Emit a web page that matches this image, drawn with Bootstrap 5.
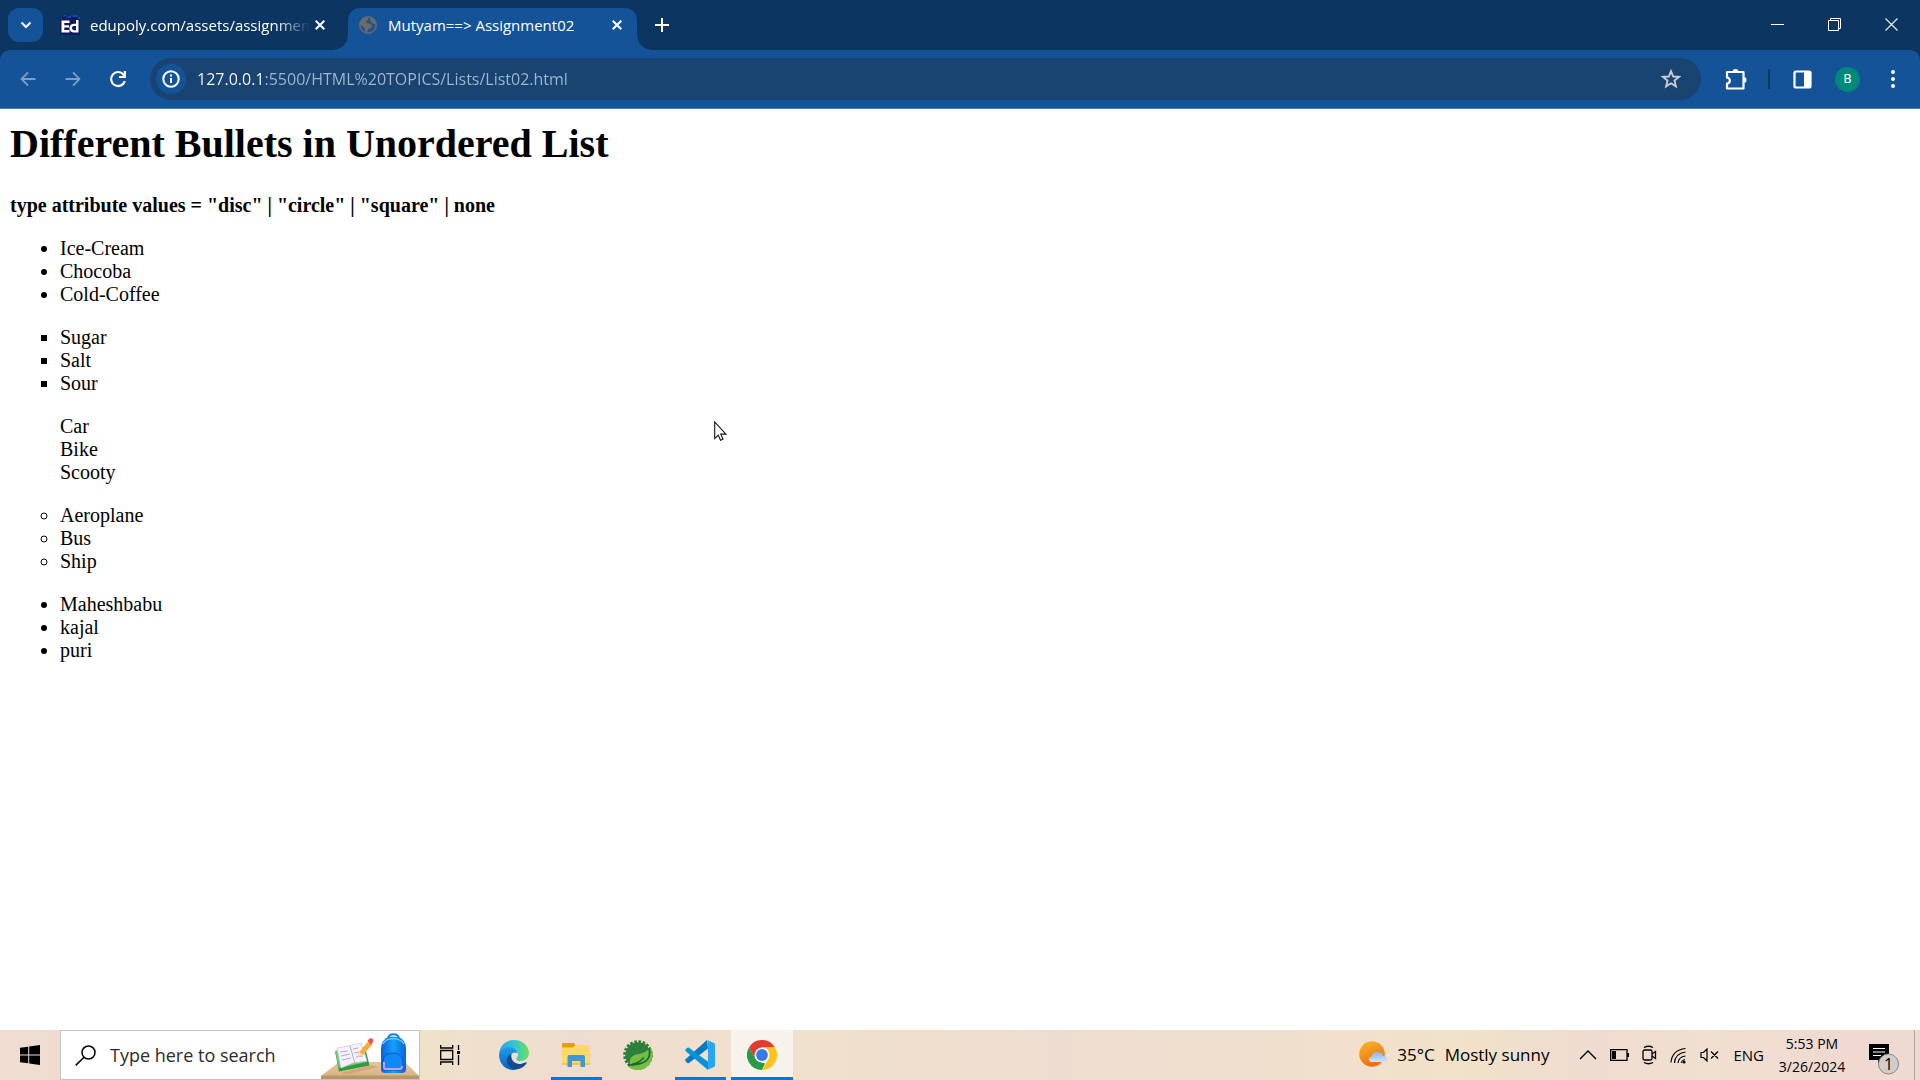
<!DOCTYPE html>
<html lang="en">
<head>
<meta charset="utf-8">
<meta name="viewport" content="width=device-width, initial-scale=1">
<title>Mutyam==&gt; Assignment02</title>
<link href="https://cdn.jsdelivr.net/npm/bootstrap@5.3.0/dist/css/bootstrap.min.css" rel="stylesheet">
<style>
  :root { --frame: #0c3561; --bar: #155399; --pill: #194472; }
  body { font-family: "Open Sans", "Noto Sans", sans-serif; color: #000; background: #fff; }
  button, input { font-family: inherit; }
  svg { display: block; flex: none; }
  .plain { border: 0; background: none; padding: 0; color: inherit; display: flex; align-items: center; justify-content: center; flex: none; }

  /* tab strip */
  .strip { background: var(--frame); height: 50px; color: #fff; padding-left: 8px; }
  .tab-search { width: 35px; height: 34px; border-radius: 11px; background: var(--bar); }
  .tab-item { height: 42px; font-size: 15px; padding: 0 8px 8px 10px; }
  .tab-item a { color: #fff; text-decoration: none; white-space: nowrap; line-height: 34px; padding-left: 10px; }
  .tab-back { width: 288px; margin-left: 7px; }
  .tab-back a { -webkit-mask-image: linear-gradient(90deg, #000 85%, transparent); mask-image: linear-gradient(90deg, #000 85%, transparent); }
  .tab-front { width: 289px; margin-left: 10px; background: var(--bar); border-radius: 12px 12px 0 0; position: relative; padding-right: 10px; }
  .tab-front::before, .tab-front::after { content: ""; position: absolute; bottom: 0; width: 14px; height: 14px; }
  .tab-front::before { left: -14px; background: radial-gradient(circle at 0 0, transparent 13px, var(--bar) 14px); }
  .tab-front::after { right: -14px; background: radial-gradient(circle at 100% 0, transparent 13px, var(--bar) 14px); }
  .tab-close { width: 20px; height: 20px; }
  .tab-new { width: 34px; height: 34px; }
  .win-btn { width: 57px; height: 40px; }

  /* toolbar */
  .tools-wrap { background: var(--frame); }
  .tools { background: var(--bar); border-radius: 10px 10px 0 0; height: 59px; color: #fff; border-bottom: 1px solid #4f7fb3; padding-left: 5px; padding-right: 5px; }
  .nav-btn { width: 45px; height: 42px; }
  .dim { color: #7d9fc7; }
  .pill { background: var(--pill); height: 42px; border-radius: 21px; margin: 0 12px 0 10px; padding: 0 20px 0 6px; }
  .site-info { width: 30px; height: 30px; border-radius: 50%; background: var(--bar); }
  .url-box { border: 0; outline: 0; padding: 0 0 0 11px; font-size: 16px; height: 36px; min-width: 0; color: transparent; caret-color: #fff;
    background: linear-gradient(90deg, #fff 75px, #a3b8cf 75px); -webkit-background-clip: text; background-clip: text; }
  .tool-btn { width: 45px; height: 42px; }
  .split { width: 2px; height: 20px; background: #0c3561; margin: 0 10px; }
  .avatar { width: 25px; height: 25px; border-radius: 50%; background: #00897b; font-family: Roboto, sans-serif; font-size: 13px; }

  /* page */
  .doc { font-family: "Liberation Serif", serif; font-size: 20px; line-height: 23px; padding: 12px 10px; }
  .doc h1 { font-size: 40px; line-height: 46px; font-weight: bold; margin: 0 0 27px; }
  .doc h4 { font-size: 20px; line-height: 23px; font-weight: bold; margin: 0 0 20px; }
  .doc ul { padding-left: 50px; margin: 0 0 20px; }
  .l-square { list-style: square; }
  .l-none { list-style: none; }
  .l-circle { list-style: circle; }
  .pointer { position: absolute; left: 714px; top: 421px; }

  /* taskbar */
  .taskbar { height: 50px; background: linear-gradient(90deg, #f0dcd2 0, #efdccf 3%, #f0e1ca 22%, #efdcd0 30%, #f0e1cb 40%, #eedcd0 55%, #f2e0cd 70%, #f1e2c8 76%, #efdbd0 83%, #f1dfcf 89%, #efd9d1 96%, #efdad2 100%); }
  .find { width: 360px; background: #fff; border: 1px solid #c4c4c4; padding-left: 14px; overflow: hidden; }
  .find input { border: 0; outline: 0; padding: 0; margin-left: 14px; font-size: 18px; min-width: 0; width: 190px; }
  .find input::placeholder { color: #2b2b2b; opacity: 1; }
  .task { width: 62px; height: 50px; position: relative; }
  .task-edge { width: 60px; }
  .task-view { width: 60px; margin-right: 3px; }
  .running::after { content: ""; position: absolute; left: 6px; right: 5px; bottom: 0; height: 3px; background: #0078d7; }
  .current { background: #f8f2ec; }
  .current::after { left: 0; right: 0; }
  .tray { font-size: 17px; }
  .tray-text { margin-left: 10px; }
  .tray-small { font-size: 15px; }
  .tray-icons { gap: 13px; margin: 0 14px 0 30px; }
  .clock { font-size: 14px; line-height: 23px; width: 84px; text-align: center; flex: none; margin-left: 6px; }
  .notes { margin: 8px 14px 0 15px; }
  .desk-edge { width: 6px; height: 50px; border-left: 1px solid #b3a5a0; }
</style>
<script src="https://cdn.jsdelivr.net/npm/bootstrap@5.3.0/dist/js/bootstrap.bundle.min.js"></script>
</head>
<body class="d-flex flex-column min-vh-100">

<header>
  <div class="strip d-flex align-items-end">
    <button class="plain tab-search mb-2" aria-label="Search tabs">
      <svg width="12" height="8" viewBox="0 0 12 8" fill="none" stroke="#fff" stroke-width="2"><path d="M1.500 1.500 6 6l4.500-4.500"/></svg>
    </button>
    <div class="tab-item tab-back d-flex align-items-center">
      <svg width="20" height="20" viewBox="0 0 20 20"><path fill="#111a5c" d="M0 2h20v18H0z"/><path fill="#1746ad" d="M1 3h1v2H1zM4 0h2v1H4zM8 1h3v2H8zM13 0h5v2h-5zM6 2h1v2H6zM18 2h2v2h-2z"/><path fill="#fff" d="M1.500 5.500h8V8H4.300v2.200h4.700v2.300H4.300V15h5.200v2.500h-8zM18.500 5v12.500h-4.700a4.400 4.400 0 0 1 0-8.800H16V5zM16 11h-2a2.100 2.100 0 0 0 0 4.200h2z"/></svg>
      <a href="#" class="flex-grow-1">edupoly.com/assets/assignmen</a>
      <button class="plain tab-close" aria-label="Close tab"><svg width="10" height="10" viewBox="0 0 10 10" stroke="#fff" stroke-width="2"><path d="m.7.7 8.600 8.600M9.300.7.7 9.300"/></svg></button>
    </div>
    <div class="tab-item tab-front d-flex align-items-center">
      <svg width="20" height="20" viewBox="0 0 20 20"><circle cx="10" cy="10" r="8.200" fill="#2c527e" stroke="#666b70" stroke-width="1.500"/><path fill="#6b6c6d" d="M2 8c1-4 4-6 7-6.300L10.500 4 8 6.500l1.500 2 3 .5 1.500 2-1 2-3 1-1 3.500C7 17 7 15 7 13.500L4.500 11 2 10zM12.500 2.500c3 1 5.500 3.500 5.500 7l-2.500-.8-2-1.700L12 5.500z"/></svg>
      <a href="#" class="flex-grow-1">Mutyam==&gt; Assignment02</a>
      <button class="plain tab-close" aria-label="Close tab"><svg width="10" height="10" viewBox="0 0 10 10" stroke="#fff" stroke-width="2"><path d="m.7.7 8.600 8.600M9.300.7.7 9.300"/></svg></button>
    </div>
    <button class="plain mb-2 ms-2 tab-new" aria-label="New tab"><svg width="14" height="14" viewBox="0 0 14 14" stroke="#fff" stroke-width="2"><path d="M7 0v14M0 7h14"/></svg></button>
    <div class="d-flex ms-auto align-self-start mt-1">
      <button class="plain win-btn" aria-label="Minimize"><svg width="13" height="13" viewBox="0 0 13 13" stroke="#fff"><path d="M0 6.500h13"/></svg></button>
      <button class="plain win-btn" aria-label="Restore"><svg width="13" height="13" viewBox="0 0 13 13" stroke="#fff" fill="none"><path d="M.5 2.500h10v10H.5zM2.500 2.500v-2h10v10h-2"/></svg></button>
      <button class="plain win-btn" aria-label="Close"><svg width="13" height="13" viewBox="0 0 13 13" stroke="#e6ebf2" stroke-width="1.200"><path d="m.5.5 12 12M12.500.5l-12 12"/></svg></button>
    </div>
  </div>
  <div class="tools-wrap">
    <div class="tools d-flex align-items-center">
      <button class="plain nav-btn dim" aria-label="Back"><svg width="16" height="16" viewBox="0 0 16 16" fill="none" stroke="currentColor" stroke-width="1.800"><path d="M15.500 8H1.500M8 1.300 1.500 8 8 14.700"/></svg></button>
      <button class="plain nav-btn dim" aria-label="Forward"><svg width="16" height="16" viewBox="0 0 16 16" fill="none" stroke="currentColor" stroke-width="1.800"><path d="M.5 8h14M8 1.300 14.500 8 8 14.700"/></svg></button>
      <button class="plain nav-btn" aria-label="Reload"><svg width="18" height="18" viewBox="0 0 18 18" fill="none" stroke="#fff" stroke-width="2.200"><path d="M15.800 11.200A7 7 0 1 1 14.500 4.500L15.500 6"/><path fill="#fff" stroke="none" d="M17 1v7h-7V6h4.800V1z"/></svg></button>
      <div class="pill d-flex align-items-center flex-grow-1">
        <button class="plain site-info" aria-label="View site information"><svg width="18" height="18" viewBox="0 0 18 18" fill="none" stroke="#fff" stroke-width="2"><circle cx="9" cy="9" r="7.700"/><path d="M9 8v5M9 4.500v2"/></svg></button>
        <input class="url-box flex-grow-1" type="text" aria-label="Address" value="127.0.0.1:5500/HTML%20TOPICS/Lists/List02.html">
        <button class="plain" aria-label="Bookmark this tab"><svg width="20" height="20" viewBox="0 0 20 20" fill="none" stroke="#c9cdd2" stroke-width="1.900"><path d="m10 2.200 2.200 5.300 5.700.4-4.400 3.700 1.400 5.800-4.900-3.100-4.900 3.100 1.400-5.800L2.100 7.900l5.700-.4z"/></svg></button>
      </div>
      <button class="plain tool-btn" aria-label="Extensions"><svg width="24" height="24" viewBox="0 0 24 24"><path fill="none" stroke="#fff" stroke-width="2.200" stroke-linejoin="round" d="M3 5h16.500v16.500H3v-5c3.800 0 3.800-5.800 0-5.800z"/><path fill="#fff" d="M8.500 5a3 3 0 0 1 6 0zM19.500 10a3 3 0 0 1 0 6z"/></svg></button>
      <div class="split"></div>
      <button class="plain tool-btn" aria-label="Side panel"><svg width="19" height="19" viewBox="0 0 19 19"><rect x="1.500" y="1.500" width="16" height="16" rx="1.500" fill="none" stroke="#fff" stroke-width="2.200"/><path fill="#fff" d="M11 1h7v17h-7z"/></svg></button>
      <button class="plain tool-btn" aria-label="Profile"><span class="avatar d-flex align-items-center justify-content-center">B</span></button>
      <button class="plain tool-btn" aria-label="Menu"><svg width="4" height="18" viewBox="0 0 4 18" fill="#fff"><circle cx="2" cy="2" r="2"/><circle cx="2" cy="9" r="2"/><circle cx="2" cy="16" r="2"/></svg></button>
    </div>
  </div>
</header>

<main class="doc flex-grow-1">
  <h1>Different Bullets in Unordered List</h1>
  <h4>type attribute values = "disc" | "circle" | "square" | none</h4>
  <ul><li>Ice-Cream</li><li>Chocoba</li><li>Cold-Coffee</li></ul>
  <ul class="l-square"><li>Sugar</li><li>Salt</li><li>Sour</li></ul>
  <ul class="l-none"><li>Car</li><li>Bike</li><li>Scooty</li></ul>
  <ul class="l-circle"><li>Aeroplane</li><li>Bus</li><li>Ship</li></ul>
  <ul><li>Maheshbabu</li><li>kajal</li><li>puri</li></ul>
</main>

<svg class="pointer" width="14" height="21" viewBox="0 0 14 21"><path d="M.7 1v16.500l3.600-3.400 2.200 5.100 2.500-1-2.200-5.100h5.100z" fill="#fff" stroke="#111" stroke-width="1.100"/></svg>

<footer class="taskbar d-flex align-items-stretch">
  <button class="plain task task-edge" aria-label="Start"><svg width="20" height="20" viewBox="0 0 20 20"><path d="M0 2.800 8.200 1.700v7.800H0zM9.200 1.500 20 0v9.500H9.200zM0 10.500h8.200v7.800L0 17.200zM9.200 10.500H20V20L9.200 18.500z"/></svg></button>
  <label class="find d-flex align-items-center flex-shrink-0">
    <svg width="21" height="21" viewBox="0 0 21 21" fill="none" stroke="#000" stroke-width="1.500"><circle cx="13.500" cy="7.500" r="6.500"/><path d="M9 12.200.7 20.400"/></svg>
    <input type="search" placeholder="Type here to search" aria-label="Search Windows">
    <svg class="ms-auto" width="98" height="48" viewBox="0 0 98 48">
      <defs>
        <linearGradient id="desk" x2="0" y2="1"><stop stop-color="#e6c79c"/><stop offset="1" stop-color="#d7b384"/></linearGradient>
        <linearGradient id="bag"><stop stop-color="#0b62d8"/><stop offset=".5" stop-color="#14a1fb"/><stop offset="1" stop-color="#0a63dc"/></linearGradient>
      </defs>
      <path fill="url(#desk)" d="M18 31h66l14 14H0z"/><path fill="#bb9566" d="M0 44.500h98V48H0z"/>
      <path fill="#b98f60" opacity=".4" d="M20 42 50 34l8 2-30 7z"/>
      <path fill="#2f9b41" d="m14 20 4 20.500 30.500-6L44 16z"/><path fill="#72c77a" d="m14 20 4 17 28-6-3-14z"/>
      <path fill="#f5f2fd" stroke="#c8c2df" stroke-width=".7" d="m16 17 13-2.500L40 12l6 18-14 2-12 5z"/><path stroke="#b5abc8" fill="none" d="m29 15 5 17M19 21l8-1M20 25l9-2M21 29l9-2M32 18l5-1M33 22l6-1M35 26l7-1"/>
      <path fill="#f9ad32" d="M47 10.500 51 14 41.500 24 37 26l1.500-5z"/><path fill="#ffe0a8" d="M37 26l1.500-5 3 3z"/><path fill="#f0534b" d="m46.500 10 2-2.500c2-1 4.500 1 3.500 3L50.500 14z"/>
      <path fill="none" stroke="#127ee7" stroke-width="2" d="M67 8c0-6.500 11-6.500 11 0"/>
      <path fill="url(#bag)" d="M60 18c0-8 5-12.500 12.500-12.500S85 10 85 18v20q0 4-4 4H64q-4 0-4-4z"/>
      <path fill="none" stroke="#8bd9ff" stroke-width="1.200" d="M62 13c3-7 17-7 21 0"/>
      <path fill="#1188f4" stroke="#0a57cb" d="M62 31c0-12 20-12 20 0v6q0 2-2 2H64q-2 0-2-2z"/><path d="M63 31v5q0 2 2 2h14q2 0 2-3" fill="none" stroke="#c4a0ff" stroke-width="2"/>
    </svg>
  </label>
  <button class="plain task task-view" aria-label="Task view"><svg width="21" height="20" viewBox="0 0 21 20" fill="none" stroke="#000" stroke-width="1.300"><path d="M.7 5.500h12v9h-12zM.7 0v3h12V0M.7 20v-3h12v3M18.500 0v5M18.500 10v10"/><path d="M17 6h3v3h-3z" fill="#000" stroke="none"/></svg></button>
  <button class="plain task" aria-label="Microsoft Edge"><svg width="30" height="30" viewBox="0 0 30 30">
    <defs><linearGradient id="e1"><stop stop-color="#24a5e6"/><stop offset=".5" stop-color="#34c4d5"/><stop offset="1" stop-color="#6be156"/></linearGradient><linearGradient id="e2" x2="0" y2="1"><stop stop-color="#1f9ce8"/><stop offset="1" stop-color="#0b61c1"/></linearGradient></defs>
    <path fill="url(#e1)" d="M0 14C1 5 7 0 15 0c9 0 15 6.500 15 13 0 5-4 8-8.500 8-3.500 0-5-1.500-3.500-3.500 3-4-.5-8.500-6.500-9C6 8 2 10.500 0 14z"/>
    <path fill="url(#e2)" d="M0 14C2 9 7 6.500 12 7.500c3.500.7 6 3 6.500 5.500-4-2-8 1.500-8 5.500 0 6 4 10.500 8 11C8 32 0 25 0 14z"/>
    <path fill="#114c93" d="M12.500 13.500c-1.500 7 4 11.500 10 10.200 2.500-.5 4-1.700 5-1.500.6.200.2 1-.4 1.800C22 31 12 31 8.500 24.500c-2-4-.5-8.500 4-11z"/></svg></button>
  <button class="plain task running" aria-label="File Explorer"><svg width="28" height="24" viewBox="0 0 28 24"><path fill="#e3a008" d="M0 1q0-1 1-1h11l2 3v4H0z"/><path fill="#ffd968" d="M0 4.500h11L14 2h13q1 0 1 1v18q0 1-1 1H1q-1 0-1-1z"/><path fill="#f5c448" d="M0 20h28v1.500L27 22H1z"/><path fill="#3f97d3" d="M5.500 24V14q0-2 2-2h13.500q2 0 2 2v10h-4.500v-6h-8.500v6z"/></svg></button>
  <button class="plain task" aria-label="Spring Tool Suite"><svg width="30" height="30" viewBox="0 0 30 30"><circle cx="15" cy="15" r="12.700" fill="#2e7f3b"/><circle cx="15" cy="15" r="13.300" fill="none" stroke="#2e7f3b" stroke-width="3" stroke-dasharray="2.600 1.580"/><path fill="#76bd43" d="M27.500 7C33 18 26 30 15 30 10 30 7 28.500 5 26c12 1 21-5 22.500-19z"/><path fill="#76bd43" d="M25.500 9c1 9-3 15-14 13.800L7 24.500c-1-7 2.500-9.500 8.500-10.500 5-.8 7.500-2 10-5z"/><path fill="none" stroke="#1d6832" stroke-width="1.600" d="M5 25.500c7-1 12-3.500 16-8M26.500 9c2 10-5 16-17 15"/></svg></button>
  <button class="plain task running" aria-label="Visual Studio Code"><svg width="30" height="30" viewBox="0 0 30 30"><path fill="#0879c4" d="m22 0 1 8.500L4 23q-1 .6-2-.3L.5 21q-.8-1 .3-2z"/><path fill="#0992dc" d="M.6 9.200 2 8q1-1 2-.2l19 14V30L.8 11.200q-1-1-.2-2z"/><path fill="#27a7f2" d="m22 0 7 3q1 .5 1 1.500v21q0 1-1 1.500l-7 3q1-1 1-2.500v-25Q23 1 22 0z"/></svg></button>
  <button class="plain task running current" aria-label="Google Chrome"><svg width="30" height="30" viewBox="0 0 30 30"><path fill="#e33b2e" d="M2 7.500a15 15 0 0 1 26 0H15L8.500 19z"/><path fill="#2b9a46" d="M2 7.500 8.500 18.800 15 22.500l3 1L15 30A15 15 0 0 1 2 7.500z"/><path fill="#fcc31e" d="M28 7.500A15 15 0 0 1 15 30l6.500-11.200L21 10l-6-2.500z"/><circle cx="15" cy="15" r="7.500" fill="#fff"/><circle cx="15" cy="15" r="5.900" fill="#347ced"/></svg></button>

  <div class="tray d-flex align-items-center ms-auto">
    <svg width="28" height="28" viewBox="0 0 28 28"><defs><linearGradient id="sun" x2=".4" y2="1"><stop stop-color="#f3bb27"/><stop offset="1" stop-color="#f36d16"/></linearGradient><linearGradient id="cl" x2="0" y2="1"><stop stop-color="#8db1ee"/><stop offset="1" stop-color="#d3e5fc"/></linearGradient></defs><circle cx="13" cy="13" r="12.800" fill="url(#sun)"/><path fill="url(#cl)" d="M13 21c-4-.3-4-5.500 0-5.500 0-4 4-6 7-3.500 3-.6 4 1 4 3 5 0 5 6 1 6z"/></svg>
    <span class="tray-text">35°C</span><span class="tray-text text-nowrap">Mostly sunny</span>
    <div class="d-flex align-items-center tray-icons">
      <svg width="18" height="10" viewBox="0 0 18 10" fill="none" stroke="#000" stroke-width="1.400"><path d="m1 9 8-8 8 8"/></svg>
      <svg width="19" height="12" viewBox="0 0 19 12"><path fill="none" stroke="#000" stroke-width="1.300" d="M.7.7h16.300v10.600H.7z"/><path d="M2 2h4v8H2zM17 4h2v4h-2z"/></svg>
      <svg width="15" height="20" viewBox="0 0 15 20" fill="none" stroke="#000" stroke-width="1.300"><rect x="1" y="5" width="9" height="10" rx="1.500"/><path d="m10 9 3.500-2.500v7L10 11M2 2.500q4.500-2.500 9 0M2 17.500q4.500 2.500 9 0"/></svg>
      <svg width="17" height="17" viewBox="0 0 17 17" fill="none" stroke="#000" stroke-width="1.200"><path d="M1 15.500Q2 3 15.500 1.500M4.500 16Q5 6.500 15.500 5M8 16Q8.500 10 15.500 9"/><path stroke-width="1" d="M11 16q.5-3 4-3.500"/><circle cx="14" cy="15" r="1.600" fill="#000" stroke="none"/></svg>
      <svg width="19" height="14" viewBox="0 0 19 14" fill="none" stroke="#000" stroke-width="1.200"><path d="M1 4.500h2.500L7 1v12L3.500 9.500H1zM11 3.500l7 7M18 3.500l-7 7"/></svg>
    </div>
    <span class="tray-small">ENG</span>
    <div class="clock">5:53 PM<br>3/26/2024</div>
    <button class="plain notes" aria-label="Notifications"><svg width="31" height="31" viewBox="0 0 31 31"><path d="M0 0h20v16H12l-3 3.500V16H0z"/><path stroke="#fff" d="M4 4.500h12M4 8h12M4 11.500h8" stroke-width="1.200"/><circle cx="19.500" cy="20" r="10" fill="#d2cbca" stroke="#8b8685"/><text x="19.500" y="26" text-anchor="middle" font-size="16" font-family="Open Sans, sans-serif">1</text></svg></button>
    <div class="desk-edge"></div>
  </div>
</footer>
</body>
</html>
